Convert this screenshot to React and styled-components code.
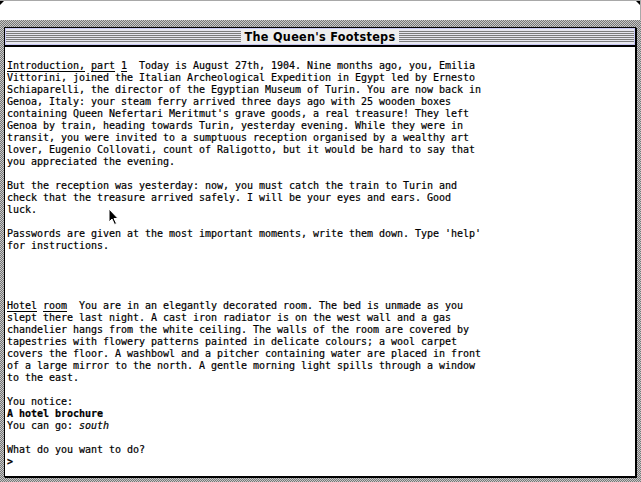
import React from "react";
import styled, { createGlobalStyle } from "styled-components";

const Global = createGlobalStyle`
  html, body { margin: 0; padding: 0; background: #fff; }
  body { width: 641px; height: 482px; overflow: hidden; }
`;

const Screen = styled.div`
  position: relative;
  width: 641px;
  height: 482px;
  display: flex;
  flex-direction: column;
  background: #fff;
`;

const MenuBar = styled.div`
  position: relative;
  height: 19px;
  border-top: 1px solid #a8a8a8;
  border-right: 1px solid #a8a8a8;
  background: #fff;
  &::before, &::after {
    content: "";
    position: absolute;
    top: 0;
    width: 0;
    height: 0;
    border-style: solid;
  }
  &::before { left: 0; border-width: 4px 4px 0 0; border-color: #000 transparent transparent transparent; }
  &::after { right: 0; border-width: 0 4px 4px 0; border-color: transparent #000 transparent transparent; }
`;

const Desktop = styled.div`
  flex: 1;
  display: flex;
  padding: 7px 5px 5px 4px;
  background-color: #9a9a9a;
  background-image: repeating-conic-gradient(#777 0% 25%, #c8c8c8 0% 50%);
  background-size: 2px 2px;
`;

const Window = styled.div`
  flex: 1;
  display: flex;
  flex-direction: column;
  border: 1px solid #000;
  box-shadow: 1px 1px 0 #000;
  background: #fff;
`;

const TitleBar = styled.div`
  height: 15px;
  border: 1px solid #c8c8f4;
  display: flex;
  align-items: center;
  justify-content: center;
  background-color: #e8e8f0;
  background-image: repeating-linear-gradient(
    to bottom,
    #e6e6ee 0px, #e6e6ee 1px,
    #7c7c7c 1px, #7c7c7c 2px
  );
  background-size: 100% 12px;
  background-position: 0 1px;
  background-repeat: repeat-x;
`;

const TitleDivider = styled.div`
  height: 2px;
  background: #000;
`;

const Title = styled.span`
  background: #eeeeee;
  padding: 0 4px;
  height: 15px;
  line-height: 15px;
  font-family: "DejaVu Sans Condensed", "DejaVu Sans", sans-serif;
  font-weight: bold;
  font-size: 12.5px;
  letter-spacing: 0.3px;
  color: #000;
`;

const Content = styled.div`
  flex: 1;
  padding: 13px 0 0 2px;
  font-family: "DejaVu Sans Mono", "Liberation Mono", monospace;
  font-size: 10px;
  letter-spacing: -0.02px;
  color: #000;
  -webkit-text-stroke: 0.2px #000;
`;

const Line = styled.div`
  height: 12px;
  line-height: 12px;
  white-space: pre;
`;

const U = styled.span`
  text-decoration: underline;
  text-underline-offset: 2px;
`;

const B = styled.span`
  font-weight: bold;
`;

const I = styled.span`
  font-style: italic;
`;

const Pointer = styled.svg`
  position: absolute;
  left: 108px;
  top: 208px;
`;

const intro = [
  "Vittorini, joined the Italian Archeological Expedition in Egypt led by Ernesto",
  "Schiaparelli, the director of the Egyptian Museum of Turin. You are now back in",
  "Genoa, Italy: your steam ferry arrived three days ago with 25 wooden boxes",
  "containing Queen Nefertari Meritmut's grave goods, a real treasure! They left",
  "Genoa by train, heading towards Turin, yesterday evening. While they were in",
  "transit, you were invited to a sumptuous reception organised by a wealthy art",
  "lover, Eugenio Collovati, count of Raligotto, but it would be hard to say that",
  "you appreciated the evening.",
  "",
  "But the reception was yesterday: now, you must catch the train to Turin and",
  "check that the treasure arrived safely. I will be your eyes and ears. Good",
  "luck.",
  "",
  "Passwords are given at the most important moments, write them down. Type 'help'",
  "for instructions.",
  "",
  "",
  "",
  "",
];

const room = [
  "slept there last night. A cast iron radiator is on the west wall and a gas",
  "chandelier hangs from the white ceiling. The walls of the room are covered by",
  "tapestries with flowery patterns painted in delicate colours; a wool carpet",
  "covers the floor. A washbowl and a pitcher containing water are placed in front",
  "of a large mirror to the north. A gentle morning light spills through a window",
  "to the east.",
  "",
  "You notice:",
];

export default function App() {
  return (
    <Screen>
      <Global />
      <MenuBar />
      <Desktop>
        <Window>
          <TitleBar>
            <Title>The Queen's Footsteps</Title>
          </TitleBar>
          <TitleDivider />
          <Content>
            <Line>
              <U>Introduction,</U> <U>part</U> <U>1</U>
              {"  Today is August 27th, 1904. Nine months ago, you, Emilia"}
            </Line>
            {intro.map((t, i) => (
              <Line key={"a" + i}>{t}</Line>
            ))}
            <Line>
              <U>Hotel</U> <U>room</U>
              {"  You are in an elegantly decorated room. The bed is unmade as you"}
            </Line>
            {room.map((t, i) => (
              <Line key={"b" + i}>{t}</Line>
            ))}
            <Line>
              <B>A hotel brochure</B>
            </Line>
            <Line>
              You can go: <I>south</I>
            </Line>
            <Line />
            <Line>What do you want to do?</Line>
            <Line>
              <B>&gt;</B>
            </Line>
          </Content>
        </Window>
      </Desktop>
      <Pointer width="12" height="18" viewBox="0 0 12 18">
        <path
          d="M1 1 L1 14 L4 11 L6.5 16.5 L8.5 15.5 L6 10.5 L10 10.5 Z"
          fill="#000"
          stroke="#fff"
          strokeWidth="1"
        />
      </Pointer>
    </Screen>
  );
}
